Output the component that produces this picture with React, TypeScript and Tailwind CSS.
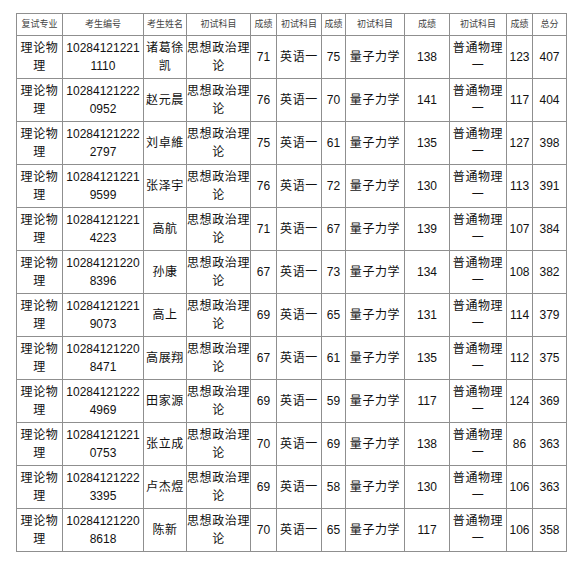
const headers = [
	"复试专业",
	"考生编号",
	"考生姓名",
	"初试科目",
	"成绩",
	"初试科目",
	"成绩",
	"初试科目",
	"成绩",
	"初试科目",
	"成绩",
	"总分",
];

const widths = [46, 81, 43, 64, 26, 45, 24, 59, 45, 57, 26, 34];

// 编号, 姓名, 政治, 英语, 专业一, 专业二, 总分
const rows: [string, string, number, number, number, number, number][] = [
	["102841212211110", "诸葛徐凯", 71, 75, 138, 123, 407],
	["102841212220952", "赵元晨", 76, 70, 141, 117, 404],
	["102841212222797", "刘卓維", 75, 61, 135, 127, 398],
	["102841212219599", "张泽宇", 76, 72, 130, 113, 391],
	["102841212214223", "高航", 71, 67, 139, 107, 384],
	["102841212208396", "孙康", 67, 73, 134, 108, 382],
	["102841212219073", "高上", 69, 65, 131, 114, 379],
	["102841212208471", "高展翔", 67, 61, 135, 112, 375],
	["102841212224969", "田家源", 69, 59, 117, 124, 369],
	["102841212210753", "张立成", 70, 69, 138, 86, 363],
	["102841212223395", "卢杰煜", 69, 58, 130, 106, 363],
	["102841212208618", "陈新", 70, 65, 117, 106, 358],
];

const td = "border border-[#8f8f8f] text-center align-middle p-0";
const zh = "tracking-[0.6px]";

export default function App() {
	return (
		<div className="w-[571px] h-[562px] bg-white pt-[13px] pl-[16px] font-['Liberation_Sans','Noto_Sans_CJK_SC',sans-serif] text-[#111]">
			<table className="table-fixed border-collapse w-[551px]">
				<colgroup>
					{widths.map((w, i) => (
						<col key={i} style={{ width: w }} />
					))}
				</colgroup>
				<thead>
					<tr className="h-[22px]">
						{headers.map((h, i) => (
							<th
								key={i}
								className={`${td} font-normal text-[9px] leading-none text-[#444]`}
							>
								{h}
							</th>
						))}
					</tr>
				</thead>
				<tbody className="text-[12px] leading-[18px]">
					{rows.map((r, i) => (
						<tr key={i} className="h-[43px]">
							<td className={`${td} ${zh}`}>理论物理</td>
							<td className={`${td} px-[2px] break-all`}>{r[0]}</td>
							<td className={`${td} ${zh}`}>{r[1]}</td>
							<td className={`${td} ${zh}`}>思想政治理论</td>
							<td className={td}>{r[2]}</td>
							<td className={`${td} ${zh}`}>英语一</td>
							<td className={td}>{r[3]}</td>
							<td className={`${td} ${zh}`}>量子力学</td>
							<td className={td}>{r[4]}</td>
							<td className={`${td} ${zh}`}>普通物理一</td>
							<td className={td}>{r[5]}</td>
							<td className={td}>{r[6]}</td>
						</tr>
					))}
				</tbody>
			</table>
		</div>
	);
}
